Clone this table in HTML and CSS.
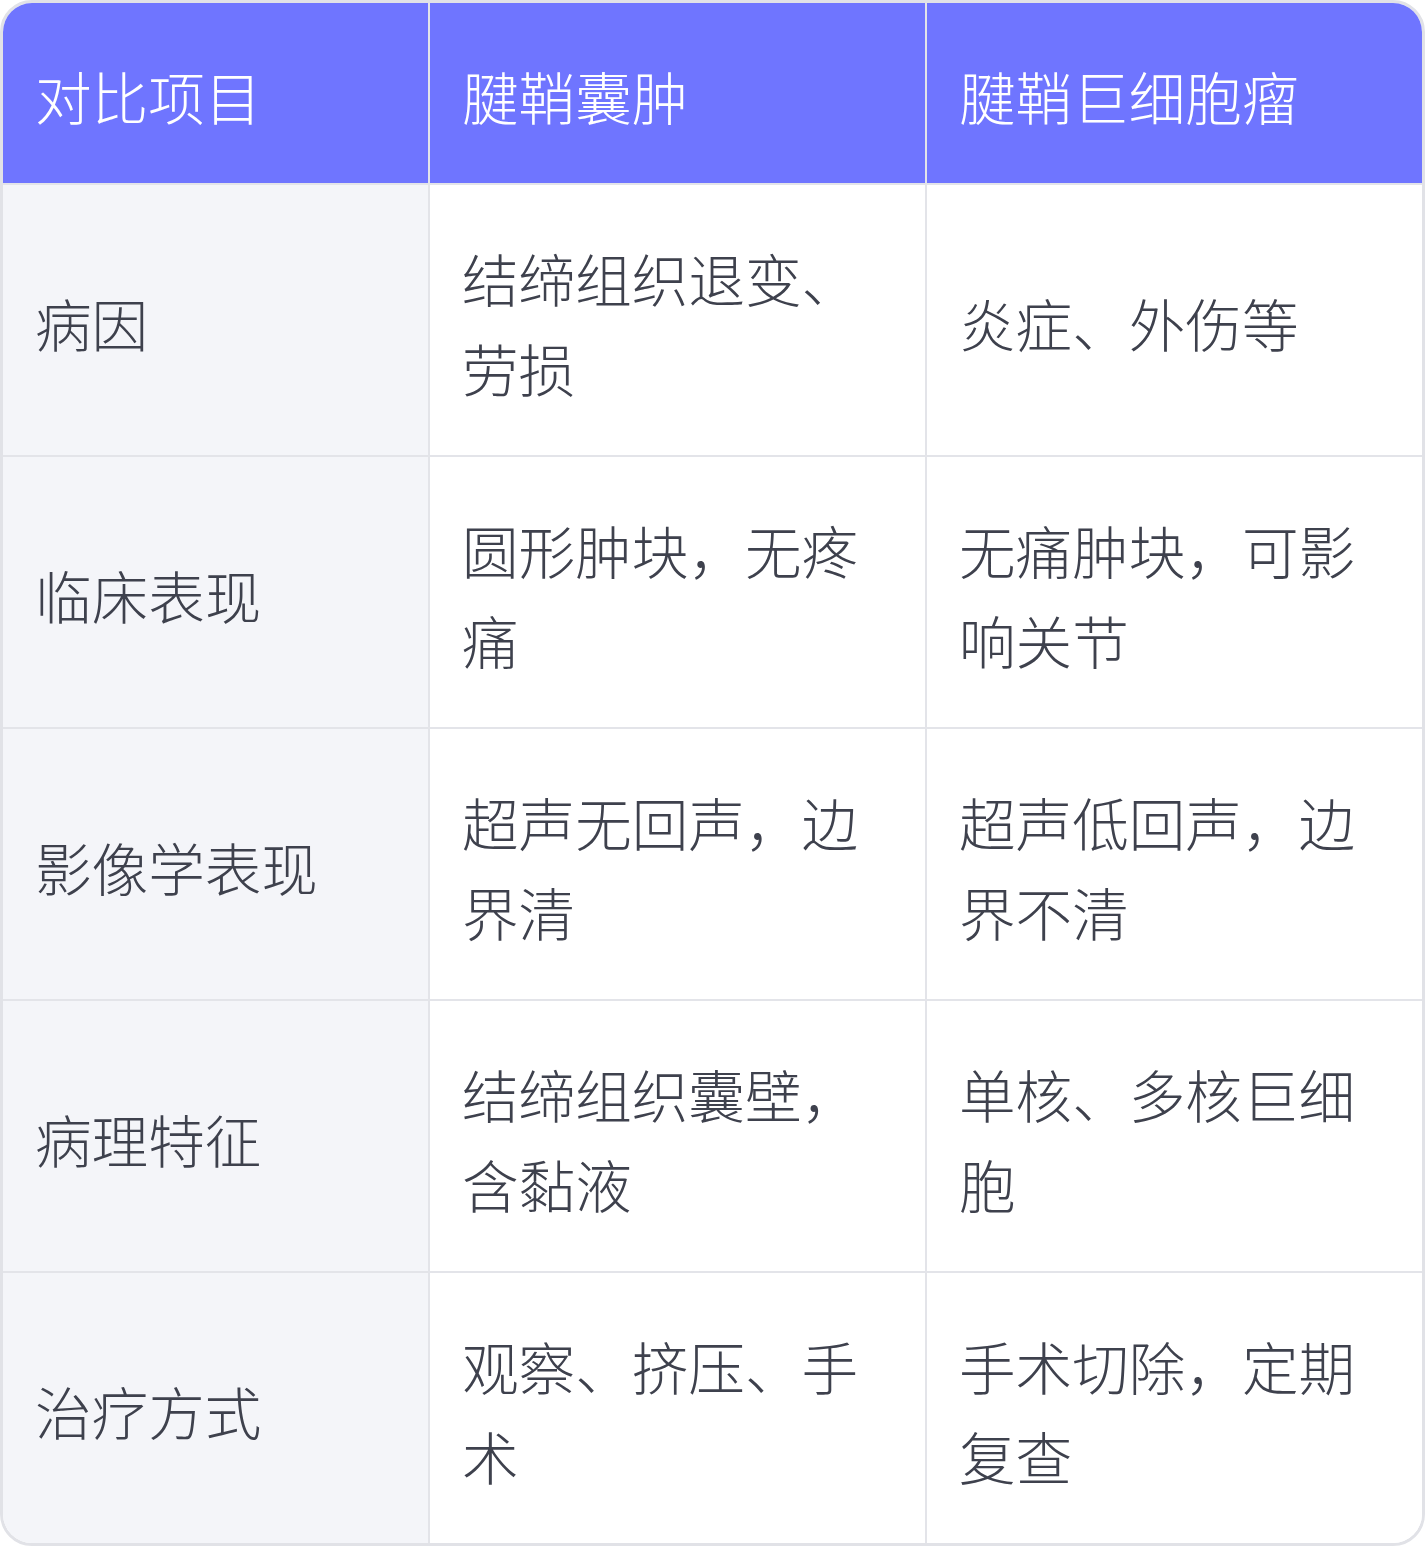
FILE: index.html
```html
<!DOCTYPE html>
<html lang="zh-CN">
<head>
<meta charset="utf-8">
<title>腱鞘囊肿与腱鞘巨细胞瘤对比</title>
<link rel="stylesheet" href="styles.css">
</head>
<body>
<div class="wrap">
  <table class="cmp">
    <colgroup>
      <col class="c1"><col class="c2"><col class="c3">
    </colgroup>
    <thead>
      <tr><th>对比项目</th><th>腱鞘囊肿</th><th>腱鞘巨细胞瘤</th></tr>
    </thead>
    <tbody>
      <tr><td>病因</td><td>结缔组织退变、劳损</td><td>炎症、外伤等</td></tr>
      <tr><td>临床表现</td><td>圆形肿块，无疼痛</td><td>无痛肿块，可影响关节</td></tr>
      <tr><td>影像学表现</td><td>超声无回声，边界清</td><td>超声低回声，边界不清</td></tr>
      <tr><td>病理特征</td><td>结缔组织囊壁，含黏液</td><td>单核、多核巨细胞</td></tr>
      <tr><td>治疗方式</td><td>观察、挤压、手术</td><td>手术切除，定期复查</td></tr>
    </tbody>
  </table>
</div>
</body>
</html>
```

FILE: styles.css
```css
html, body {
  margin: 0;
  padding: 0;
  background: #ffffff;
}

body {
  font-family: "Noto Sans CJK SC", "Noto Sans", sans-serif;
}

.wrap {
  width: 1425px;
  box-sizing: border-box;
  border: 3px solid #e1e2e7;
  border-radius: 32px;
  overflow: hidden;
  background: #ffffff;
}

.cmp {
  width: 100%;
  border-collapse: separate;
  border-spacing: 0;
  table-layout: fixed;
}

.c1 { width: 427px; }
.c2 { width: 497px; }
.c3 { width: auto; }

.cmp th,
.cmp td {
  padding: 47px 32px 43px 32px;
  font-size: 56.6px;
  line-height: 90px;
  font-weight: 300;
  text-align: left;
  vertical-align: middle;
  border-right: 2px solid #e3e4e9;
  border-bottom: 2px solid #e3e4e9;
  word-break: break-all;
}

.cmp th:last-child,
.cmp td:last-child {
  border-right: none;
}

.cmp tbody tr:last-child td {
  border-bottom: none;
}

.cmp th {
  background: #6f75ff;
  color: #ffffff;
}

.cmp td {
  color: #3e414d;
  background: #ffffff;
}

.cmp td:first-child {
  background: #f4f5f9;
}
```
